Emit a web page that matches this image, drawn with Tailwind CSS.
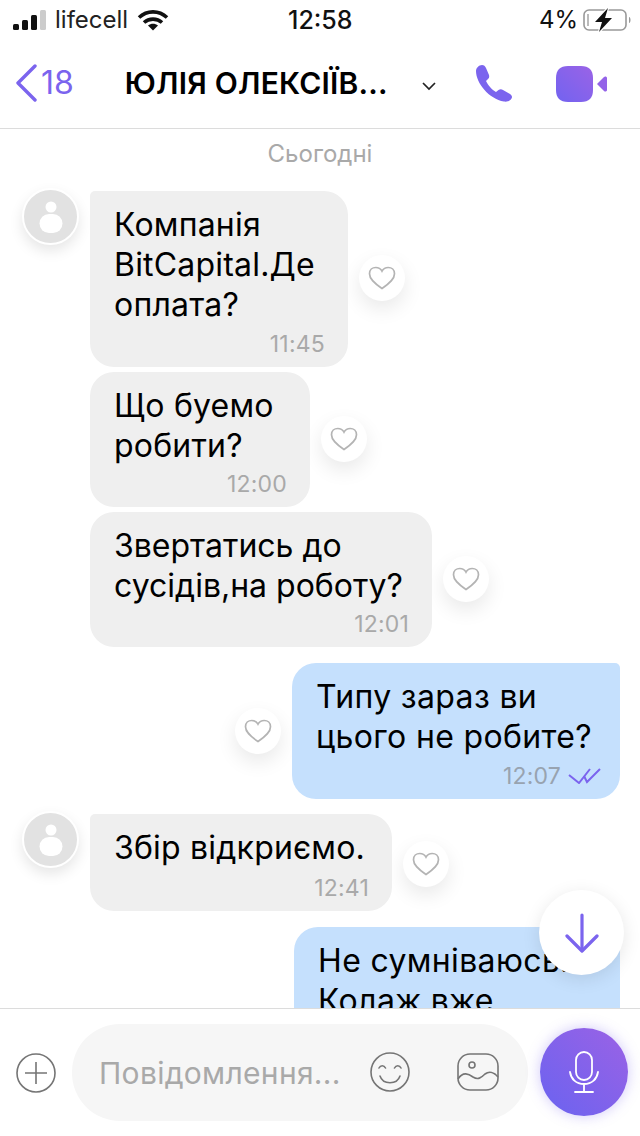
<!DOCTYPE html>
<html lang="en">
<head>
  <title>Chat</title>
  <meta charset="UTF-8" />
  <meta name="viewport" content="width=device-width, initial-scale=1" />
  <script src="https://cdn.jsdelivr.net/npm/@tailwindcss/browser@4"></script>
</head>
<body class="bg-white font-['Inter',sans-serif] text-black">
<div class="relative w-[640px] h-[1136px] overflow-hidden flex flex-col">

  <!-- Status bar -->
  <div class="h-[40px] shrink-0 relative flex items-center justify-between pl-[13px] pr-[7px] text-[24px] leading-[40px] text-[#111]">
    <div class="flex items-center">
      <svg width="33" height="20" viewBox="0 0 33 20" class="mr-[9px]">
        <rect x="0" y="14" width="6" height="6" rx="1.5" fill="#111"/>
        <rect x="9" y="10" width="6" height="10" rx="1.5" fill="#111"/>
        <rect x="18" y="5" width="6" height="15" rx="1.5" fill="#111"/>
        <rect x="27" y="0" width="6" height="20" rx="1.5" fill="#ccc"/>
      </svg>
      <span class="text-[#222]">lifecell</span>
      <svg width="32" height="22" viewBox="0 0 32 22" class="ml-[9px]" fill="none" stroke="#111" stroke-width="3.6">
        <path d="M2 8.5C10 1 22 1 30 8.5"/>
        <path d="M7 13.5C12 9 20 9 25 13.5"/>
        <path d="M16 21.5l-5-5c3-2.4 7-2.4 10 0z" fill="#111" stroke="none"/>
      </svg>
    </div>
    <span class="absolute left-[288px] top-0 text-[25px] font-medium">12:58</span>
    <div class="flex items-center">
      <span>4%</span>
      <svg width="50" height="24" viewBox="0 0 50 24" class="ml-[5px]" fill="none">
        <rect x="1" y="2" width="42" height="20" rx="5" stroke="#999" stroke-width="1.6"/>
        <rect x="4" y="6" width="2" height="12" fill="#bbb"/>
        <path d="M46 9c2 0 2 6 0 6z" fill="#999"/>
        <path d="M25 0 12 14h7l-3 10 13-14h-7z" fill="#111" stroke="#fff" stroke-width="2.4" paint-order="stroke"/>
      </svg>
    </div>
  </div>

  <!-- Nav -->
  <div class="h-[89px] shrink-0 border-b border-[#dcdcdc] relative flex items-center pb-[3px]">
    <div class="flex items-center ml-[16px] text-[#7b64ee]">
      <svg width="22" height="38" viewBox="0 0 22 38" fill="none" stroke="currentColor" stroke-width="3.4" stroke-linecap="round" stroke-linejoin="round"><path d="M19 2 2 19l17 17"/></svg>
      <span class="text-[32px] ml-[3px] leading-none">18</span>
    </div>
    <div class="ml-[51px] text-[30px] font-semibold leading-none whitespace-nowrap tracking-[0.2px]">ЮЛІЯ ОЛЕКСІЇВ...</div>
    <svg width="14" height="9" viewBox="0 0 14 9" class="absolute left-[422px] top-[42px]" fill="none" stroke="#222" stroke-width="1.7"><path d="M1 1l6 6 6-6"/></svg>
    <svg width="38" height="38" viewBox="0 0 38 38" class="absolute left-[475px] top-[25px]" fill="#7b64ee">
      <path d="M1 6C1 3 4 0 7 0c2 0 3 1 4 3l3 7c.5 2 0 3-1 4l-2 2c2 4 6 9 10 11l2.500-2c1.500-1 3-1 4.500 0l7 4c2 1.500 2.500 3 1.500 4.500C35 36 32 37 29 36.500 14 34 1 18 1 6z"/>
    </svg>
    <svg width="52" height="38" viewBox="0 0 52 38" class="absolute left-[555px] top-[25px]">
      <defs><linearGradient id="v" x1="0" y1="1" x2="1" y2="0"><stop offset="0" stop-color="#7263f0"/><stop offset="1" stop-color="#9a63e6"/></linearGradient></defs>
      <path d="M13 1h13c8 0 12 4 12 12v12c0 8-4 12-12 12H13C5 37 1 33 1 25V13C1 5 5 1 13 1z" fill="url(#v)"/>
      <path d="M42 19l7-7c1-1 3-.5 3 1v12c0 1.500-2 2-3 1z" fill="#9463e8"/>
    </svg>
  </div>

  <!-- Messages -->
  <div class="relative flex-1 overflow-hidden flex flex-col items-stretch text-[32px] leading-[40px] tracking-[0.2px]">
    <div class="text-center text-[24px] leading-[28px] text-[#a9a9a9] mt-[11px] mb-[23px] tracking-normal">Сьогодні</div>

    <!-- incoming -->
    <div class="relative flex items-center pl-[90px] mb-[5px]">
      <div class="w-[258px] h-[176px] bg-[#efefef] rounded-[24px] rounded-tl-[5px] pl-[24px] pt-[14px] relative">
        <div>Компанія<br>BitCapital.Де<br>оплата?</div>
        <span class="absolute right-[23px] bottom-[10px] text-[23px] leading-[26px] text-[#a9a9a9]">11:45</span>
      </div>
      <div class="ml-[11px] -mt-[2px] w-[46px] h-[46px] rounded-full bg-white shadow-[0_8px_20px_rgba(0,0,0,0.09)] flex items-center justify-center">
        <svg width="28" height="24" viewBox="0 0 28 24" fill="none" stroke="#b4b4b4" stroke-width="1.700"><path d="M14 22.500C6 17 1.500 13 1.500 7.800 1.500 4 4.300 1.500 7.800 1.500c2.600 0 4.900 1.400 6.200 3.700 1.300-2.300 3.600-3.700 6.200-3.700 3.500 0 6.300 2.500 6.300 6.300C26.500 13 22 17 14 22.500z"/></svg>
      </div>
      <div class="absolute left-[22px] top-[-3px] w-[57px] h-[57px] rounded-full bg-[#e2e2e2] border-[2px] border-white shadow-[0_6px_14px_rgba(0,0,0,0.10)] flex items-center justify-center">
        <svg width="24" height="32" viewBox="0 0 24 32" fill="#fff"><circle cx="12" cy="6" r="5.500"/><rect x="0.500" y="13" width="23" height="19" rx="9.500"/></svg>
      </div>
    </div>

    <div class="flex items-center pl-[90px] mb-[5px]">
      <div class="w-[220px] h-[135px] bg-[#efefef] rounded-[24px] pl-[24px] pt-[14px] relative">
        <div>Що буемо<br>робити?</div>
        <span class="absolute right-[23px] bottom-[10px] text-[23px] leading-[26px] text-[#a9a9a9]">12:00</span>
      </div>
      <div class="ml-[11px] -mt-[2px] w-[46px] h-[46px] rounded-full bg-white shadow-[0_8px_20px_rgba(0,0,0,0.09)] flex items-center justify-center">
        <svg width="28" height="24" viewBox="0 0 28 24" fill="none" stroke="#b4b4b4" stroke-width="1.700"><path d="M14 22.500C6 17 1.500 13 1.500 7.800 1.500 4 4.300 1.500 7.800 1.500c2.600 0 4.900 1.400 6.200 3.700 1.300-2.300 3.600-3.700 6.200-3.700 3.500 0 6.300 2.500 6.300 6.300C26.500 13 22 17 14 22.500z"/></svg>
      </div>
    </div>

    <div class="flex items-center pl-[90px] mb-[16px]">
      <div class="w-[342px] h-[135px] bg-[#efefef] rounded-[24px] pl-[24px] pt-[14px] relative">
        <div class="tracking-normal">Звертатись до<br>сусідів,на роботу?</div>
        <span class="absolute right-[23px] bottom-[10px] text-[23px] leading-[26px] text-[#a9a9a9]">12:01</span>
      </div>
      <div class="ml-[11px] -mt-[2px] w-[46px] h-[46px] rounded-full bg-white shadow-[0_8px_20px_rgba(0,0,0,0.09)] flex items-center justify-center">
        <svg width="28" height="24" viewBox="0 0 28 24" fill="none" stroke="#b4b4b4" stroke-width="1.700"><path d="M14 22.500C6 17 1.500 13 1.500 7.800 1.500 4 4.300 1.500 7.800 1.500c2.600 0 4.900 1.400 6.200 3.700 1.300-2.300 3.600-3.700 6.200-3.700 3.500 0 6.300 2.500 6.300 6.300C26.500 13 22 17 14 22.500z"/></svg>
      </div>
    </div>

    <!-- outgoing -->
    <div class="flex items-center justify-end pr-[20px] mb-[15px]">
      <div class="mr-[11px] w-[46px] h-[46px] rounded-full bg-white shadow-[0_8px_20px_rgba(0,0,0,0.09)] flex items-center justify-center">
        <svg width="28" height="24" viewBox="0 0 28 24" fill="none" stroke="#b4b4b4" stroke-width="1.700"><path d="M14 22.500C6 17 1.500 13 1.500 7.800 1.500 4 4.300 1.500 7.800 1.500c2.600 0 4.900 1.400 6.200 3.700 1.300-2.300 3.600-3.700 6.200-3.700 3.500 0 6.300 2.500 6.300 6.300C26.500 13 22 17 14 22.500z"/></svg>
      </div>
      <div class="w-[328px] h-[136px] bg-[#c5e0fd] rounded-[24px] rounded-tr-[5px] pl-[24px] pt-[14px] relative">
        <div class="tracking-[0.35px]">Типу зараз ви<br>цього не робите?</div>
        <div class="absolute right-[19px] bottom-[10px] flex items-center">
          <span class="text-[23px] leading-[26px] text-[#98a3b0]">12:07</span>
          <svg width="33" height="16" viewBox="0 0 33 16" class="ml-[7px]" fill="none" stroke="#7b64ee" stroke-width="2"><path d="M1 7l10 8L22 1"/><path d="M16 8l3 6L32 1"/></svg>
        </div>
      </div>
    </div>

    <!-- incoming -->
    <div class="relative flex items-center pl-[90px] mb-[16px]">
      <div class="w-[302px] h-[97px] bg-[#efefef] rounded-[24px] rounded-tl-[5px] pl-[24px] pt-[14px] relative">
        <div>Збір відкриємо.</div>
        <span class="absolute right-[23px] bottom-[10px] text-[23px] leading-[26px] text-[#a9a9a9]">12:41</span>
      </div>
      <div class="ml-[11px] mt-[2px] w-[46px] h-[46px] rounded-full bg-white shadow-[0_8px_20px_rgba(0,0,0,0.09)] flex items-center justify-center">
        <svg width="28" height="24" viewBox="0 0 28 24" fill="none" stroke="#b4b4b4" stroke-width="1.700"><path d="M14 22.500C6 17 1.500 13 1.500 7.800 1.500 4 4.300 1.500 7.800 1.500c2.600 0 4.900 1.400 6.200 3.700 1.300-2.300 3.600-3.700 6.200-3.700 3.500 0 6.300 2.500 6.300 6.300C26.500 13 22 17 14 22.500z"/></svg>
      </div>
      <div class="absolute left-[22px] top-[-3px] w-[57px] h-[57px] rounded-full bg-[#e2e2e2] border-[2px] border-white shadow-[0_6px_14px_rgba(0,0,0,0.10)] flex items-center justify-center">
        <svg width="24" height="32" viewBox="0 0 24 32" fill="#fff"><circle cx="12" cy="6" r="5.500"/><rect x="0.500" y="13" width="23" height="19" rx="9.500"/></svg>
      </div>
    </div>

    <!-- outgoing, cut off by the input bar -->
    <div class="flex justify-end pr-[20px]">
      <div class="w-[326px] h-[136px] bg-[#c5e0fd] rounded-[24px] rounded-tr-[5px] pl-[24px] pt-[14px]">
        <div class="whitespace-nowrap tracking-[0.35px]">Не сумніваюсь.<br>Колаж вже</div>
      </div>
    </div>

    <!-- scroll down -->
    <div class="absolute left-[539px] top-[761px] w-[85px] h-[85px] rounded-full bg-white shadow-[0_4px_18px_rgba(0,0,0,0.10)] flex items-center justify-center">
      <svg width="34" height="40" viewBox="0 0 34 40" fill="none" stroke="#7b64ee" stroke-width="3.200" stroke-linecap="round" stroke-linejoin="round"><path d="M17 2v35"/><path d="M2 23l15 15 15-15"/></svg>
    </div>
  </div>

  <!-- Input bar -->
  <div class="h-[128px] shrink-0 bg-white border-t border-[#dcdcdc] relative flex items-start pt-[15px] pl-[16px]">
    <svg width="40" height="40" viewBox="0 0 40 40" class="mt-[29px]" fill="none" stroke="#757575" stroke-width="1.600"><circle cx="20" cy="20" r="19"/><path d="M20 9v22M9 20h22"/></svg>
    <div class="ml-[16px] w-[456px] h-[97px] rounded-[48px] bg-[#f6f6f6] flex items-center pl-[27px] relative">
      <span class="text-[30px] text-[#a9a9a9] leading-none whitespace-nowrap tracking-[0.3px]">Повідомлення...</span>
      <svg width="40" height="40" viewBox="0 0 40 40" class="absolute left-[298px] top-[28px]" fill="none" stroke="#757575" stroke-width="1.600" stroke-linecap="round"><circle cx="20" cy="20" r="19"/><path d="M9 16c1.500-3 5-3 6.500 0M24.500 16c1.500-3 5-3 6.500 0M10 24c3 9 17 9 20 0"/></svg>
      <svg width="42" height="38" viewBox="0 0 42 38" class="absolute left-[385px] top-[29px]" fill="none" stroke="#757575" stroke-width="1.600"><rect x="1" y="1" width="40" height="36" rx="12"/><circle cx="15" cy="12" r="3"/><path d="M1 26c5-8 11-5 15-2 5 3 8 1 12-3 4-3 9-2 13 3"/></svg>
    </div>
    <div class="absolute left-[540px] top-[19px] w-[88px] h-[88px] rounded-full bg-[linear-gradient(to_top_right,#6a63f0,#9b62e5)] shadow-[0_0_14px_rgba(124,100,238,0.35)] flex items-center justify-center">
      <svg width="30" height="42" viewBox="0 0 30 42" fill="none" stroke="#fff" stroke-width="1.800" stroke-linecap="round"><rect x="7" y="1" width="16" height="28" rx="8"/><path d="M1 21c1 7 6 12 14 12s13-5 14-12M15 33v8M6 41h18"/></svg>
    </div>
  </div>

</div>
</body>
</html>
